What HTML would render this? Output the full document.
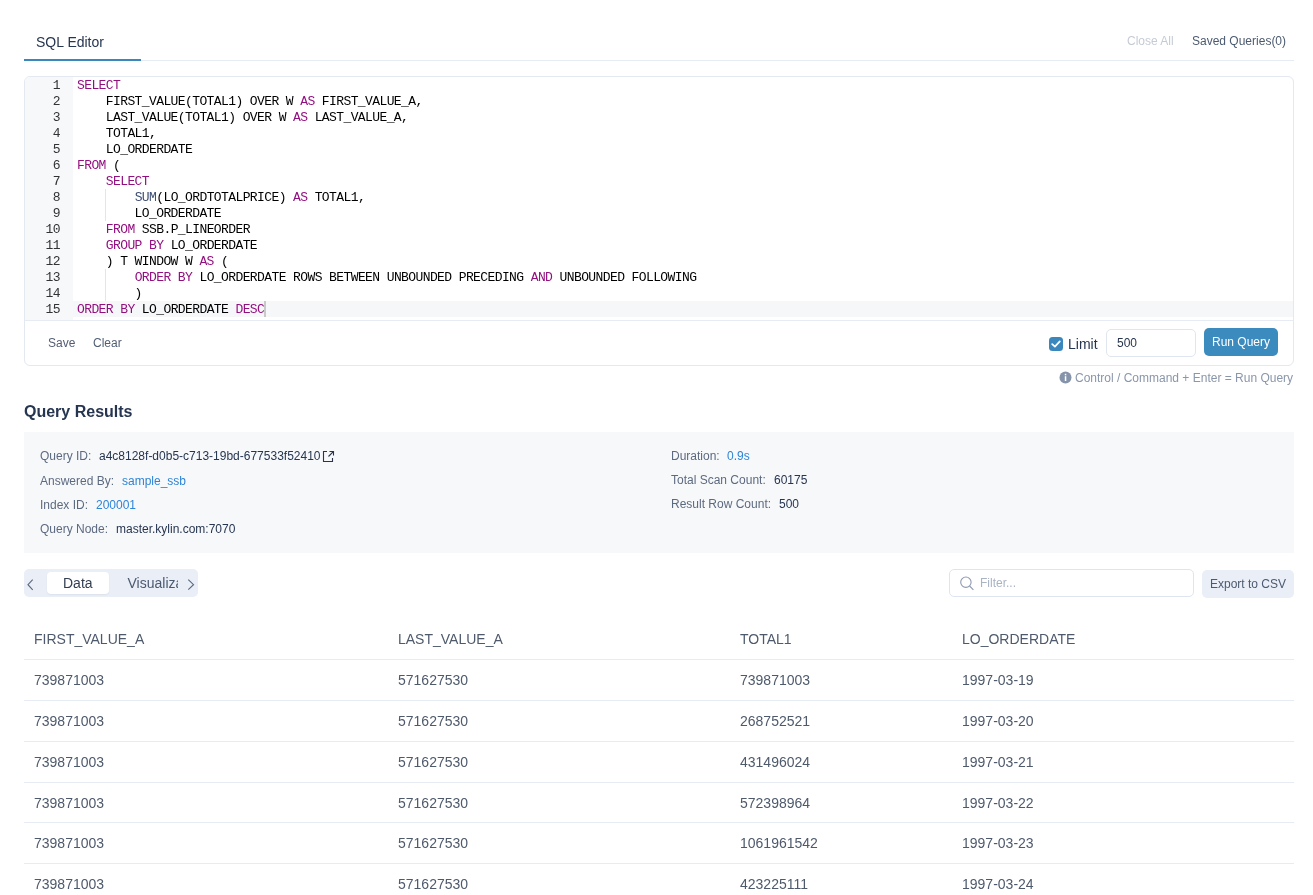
<!DOCTYPE html>
<html><head><meta charset="utf-8">
<style>
*{box-sizing:border-box;margin:0;padding:0}
html,body{width:1313px;height:895px;overflow:hidden;background:#fff;font-family:"Liberation Sans",sans-serif;}
.abs{position:absolute}
.t{position:absolute;white-space:pre;line-height:1}
/* header */
#tabtxt{left:36px;top:35px;font-size:14px;color:#263550}
#tabline{left:24px;top:59px;width:117px;height:2px;background:#3a87be}
#hdrline{left:141px;top:60px;width:1153px;height:1px;background:#e6ebf4}
#closeall{left:1127px;top:35px;font-size:12px;color:#c5cbd5}
#saved{left:1192px;top:35px;font-size:12px;color:#4c5a70}
/* editor */
#editor{left:24px;top:76px;width:1270px;height:290px;border:1px solid #e3e8f1;border-radius:6px;overflow:hidden}
#gutter{left:0;top:0;width:48px;height:243px;background:#f6f8fa}
#code{left:48px;top:0;width:1221px;height:243px}
.ln{position:absolute;left:0;width:35px;margin-top:1px;text-align:right;font-family:"Liberation Mono",monospace;font-size:13px;letter-spacing:-0.6px;line-height:16px;color:#333}
.cl{position:absolute;left:4px;margin-top:1px;font-family:"Liberation Mono",monospace;font-size:13px;letter-spacing:-0.6px;line-height:16px;color:#000;white-space:pre}
.kw{color:#930f80}
.fn{color:#3c4c72}
#active{left:0;top:224px;width:1220px;height:16px;background:#f6f7f9}
.guide{position:absolute;width:1px;background:#e5e5e5}
#cursor{left:191px;top:224px;width:2px;height:16px;background:#c9c9c9}
#tbline{left:0;top:243px;width:1270px;height:1px;background:#e6ebf4}
#save{left:23px;top:260px;font-size:12px;color:#515e74}
#clear{left:68px;top:260px;font-size:12px;color:#515e74}
#chk{left:1024px;top:260px;width:14px;height:14px;border-radius:3.5px;background:#3a87bd}
#limit{left:1043px;top:260px;font-size:14px;color:#263550}
#limitin{left:1081px;top:252px;width:90px;height:28px;border:1px solid #e0e6f0;border-radius:5px}
#limitv{left:10px;top:7px;font-size:12px;color:#263550}
#run{left:1179px;top:251px;width:74px;height:28px;border-radius:5px;background:#3b8bbe}
#runv{left:8px;top:8px;font-size:12px;color:#fff}
#hint{left:1075px;top:372px;font-size:12px;color:#8a96ab}
/* results */
#qr{left:24px;top:404px;font-size:16px;font-weight:bold;color:#263550}
#panel{left:24px;top:432px;width:1270px;height:121px;background:#f7f8fa}
.lbl{font-size:12px;color:#5c6a80}
.val{font-size:12px;color:#263550}
.lnk{font-size:12px;color:#2f84d6}
#pill{left:24px;top:569px;width:174px;height:28px;border-radius:5px;background:#e9eef7}
#datatab{left:23px;top:3px;width:62px;height:22px;border-radius:4px;background:#fff;box-shadow:0 1px 2px rgba(0,0,0,0.06)}
#filter{left:949px;top:569px;width:245px;height:28px;border:1px solid #dfe5f0;border-radius:5px}
#export{left:1202px;top:570px;width:92px;height:28px;border-radius:5px;background:#e9eef7}
.th{font-size:14px;color:#4e5a6c}
.td{font-size:14px;color:#4e5a6c}
.rb{position:absolute;left:24px;width:1270px;height:1px;background:#e6ebf4}
</style></head><body>
<div id="root" style="position:absolute;left:0;top:0;width:1313px;height:895px;will-change:transform;background:#fff">
<div id="tabtxt" class="t">SQL Editor</div>
<div id="tabline" class="abs"></div>
<div id="hdrline" class="abs"></div>
<div id="closeall" class="t">Close All</div>
<div id="saved" class="t">Saved Queries(0)</div>

<div id="editor" class="abs">
  <div id="gutter" class="abs">
    <div class="ln" style="top:0">1</div>
    <div class="ln" style="top:16px">2</div>
    <div class="ln" style="top:32px">3</div>
    <div class="ln" style="top:48px">4</div>
    <div class="ln" style="top:64px">5</div>
    <div class="ln" style="top:80px">6</div>
    <div class="ln" style="top:96px">7</div>
    <div class="ln" style="top:112px">8</div>
    <div class="ln" style="top:128px">9</div>
    <div class="ln" style="top:144px">10</div>
    <div class="ln" style="top:160px">11</div>
    <div class="ln" style="top:176px">12</div>
    <div class="ln" style="top:192px">13</div>
    <div class="ln" style="top:208px">14</div>
    <div class="ln" style="top:224px">15</div>
  </div>
  <div id="code" class="abs">
    <div id="active" class="abs"></div>
    <div class="guide" style="left:32px;top:112px;height:32px"></div>
    <div class="guide" style="left:32px;top:192px;height:32px"></div>
    <div class="cl" style="top:0"><span class="kw">SELECT</span></div>
    <div class="cl" style="top:16px">    FIRST_VALUE(TOTAL1) OVER W <span class="kw">AS</span> FIRST_VALUE_A,</div>
    <div class="cl" style="top:32px">    LAST_VALUE(TOTAL1) OVER W <span class="kw">AS</span> LAST_VALUE_A,</div>
    <div class="cl" style="top:48px">    TOTAL1,</div>
    <div class="cl" style="top:64px">    LO_ORDERDATE</div>
    <div class="cl" style="top:80px"><span class="kw">FROM</span> (</div>
    <div class="cl" style="top:96px">    <span class="kw">SELECT</span></div>
    <div class="cl" style="top:112px">        <span class="fn">SUM</span>(LO_ORDTOTALPRICE) <span class="kw">AS</span> TOTAL1,</div>
    <div class="cl" style="top:128px">        LO_ORDERDATE</div>
    <div class="cl" style="top:144px">    <span class="kw">FROM</span> SSB.P_LINEORDER</div>
    <div class="cl" style="top:160px">    <span class="kw">GROUP BY</span> LO_ORDERDATE</div>
    <div class="cl" style="top:176px">    ) T WINDOW W <span class="kw">AS</span> (</div>
    <div class="cl" style="top:192px">        <span class="kw">ORDER BY</span> LO_ORDERDATE ROWS BETWEEN UNBOUNDED PRECEDING <span class="kw">AND</span> UNBOUNDED FOLLOWING</div>
    <div class="cl" style="top:208px">        )</div>
    <div class="cl" style="top:224px"><span class="kw">ORDER BY</span> LO_ORDERDATE <span class="kw">DESC</span></div>
    <div id="cursor" class="abs"></div>
  </div>
  <div id="tbline" class="abs"></div>
  <div id="save" class="t">Save</div>
  <div id="clear" class="t">Clear</div>
  <div id="chk" class="abs"><svg width="14" height="14" viewBox="0 0 14 14" style="position:absolute;left:0;top:0"><path d="M3.2 7.2 L5.9 9.6 L10.8 4.4" fill="none" stroke="#fff" stroke-width="1.8" stroke-linecap="round" stroke-linejoin="round"/></svg></div>
  <div id="limit" class="t">Limit</div>
  <div id="limitin" class="abs"><div id="limitv" class="t">500</div></div>
  <div id="run" class="abs"><div id="runv" class="t">Run Query</div></div>
</div>
<svg class="abs" style="left:1059px;top:371px" width="13" height="13" viewBox="0 0 13 13"><circle cx="6.5" cy="6.5" r="6" fill="#8594ab"/><rect x="5.8" y="5.2" width="1.5" height="4.8" fill="#fff"/><rect x="5.8" y="2.8" width="1.5" height="1.5" fill="#fff"/></svg>
<div id="hint" class="t">Control / Command + Enter = Run Query</div>

<div id="qr" class="t">Query Results</div>
<div id="panel" class="abs">
  <div class="t lbl" style="left:16px;top:18px">Query ID:</div><div class="t val" style="left:75px;top:18px">a4c8128f-d0b5-c713-19bd-677533f52410</div>
  <svg class="abs" style="left:296px;top:17px" width="16" height="16" viewBox="0 0 16 16"><path d="M7 2.5 H3.5 V12.5 H12.5 V9" fill="none" stroke="#2a3548" stroke-width="1.1"/><path d="M9.5 2.5 H13.5 V6.5 M13.3 2.7 L8.5 7.5" fill="none" stroke="#2a3548" stroke-width="1.1"/></svg>
  <div class="t lbl" style="left:16px;top:43px">Answered By:</div><div class="t lnk" style="left:98px;top:43px">sample_ssb</div>
  <div class="t lbl" style="left:16px;top:67px">Index ID:</div><div class="t lnk" style="left:72px;top:67px">200001</div>
  <div class="t lbl" style="left:16px;top:91px">Query Node:</div><div class="t val" style="left:92px;top:91px">master.kylin.com:7070</div>
  <div class="t lbl" style="left:647px;top:18px">Duration:</div><div class="t lnk" style="left:703px;top:18px">0.9s</div>
  <div class="t lbl" style="left:647px;top:42px">Total Scan Count:</div><div class="t val" style="left:750px;top:42px">60175</div>
  <div class="t lbl" style="left:647px;top:66px">Result Row Count:</div><div class="t val" style="left:755px;top:66px">500</div>
</div>

<div id="pill" class="abs">
  <svg class="abs" style="left:3px;top:10px" width="8" height="12" viewBox="0 0 8 12"><path d="M5.7 0.6 L1 5.7 L5.7 10.8" fill="none" stroke="#5c6a80" stroke-width="1.15"/></svg>
  <div id="datatab" class="abs"></div>
  <div class="t" style="left:39px;top:7px;font-size:14px;color:#323d51">Data</div>
  <div class="abs" style="left:103px;top:0;width:51px;height:28px;overflow:hidden"><div class="t" style="left:0.5px;top:7px;font-size:14px;color:#4c5a70">Visualization</div></div>
  <svg class="abs" style="left:163px;top:10px" width="8" height="12" viewBox="0 0 8 12"><path d="M1.3 0.7 L6.5 5.7 L1.3 10.7" fill="none" stroke="#5c6a80" stroke-width="1.15"/></svg>
</div>
<div id="filter" class="abs">
  <svg class="abs" style="left:10px;top:6px" width="16" height="16" viewBox="0 0 16 16"><circle cx="5.9" cy="6.2" r="5.2" fill="none" stroke="#8f9bb0" stroke-width="1.1"/><path d="M9.6 10 L13.4 13.8" stroke="#8f9bb0" stroke-width="1.1"/></svg>
  <div class="t" style="left:30px;top:7px;font-size:12px;color:#aab3c4">Filter...</div>
</div>
<div id="export" class="abs"><div class="t" style="left:8px;top:8px;font-size:12px;color:#4c5a70">Export to CSV</div></div>

<div class="t th" style="left:34px;top:632px">FIRST_VALUE_A</div>
<div class="t th" style="left:398px;top:632px">LAST_VALUE_A</div>
<div class="t th" style="left:740px;top:632px">TOTAL1</div>
<div class="t th" style="left:962px;top:632px">LO_ORDERDATE</div>
<div class="rb" style="top:659px"></div>

<div class="t td" style="left:34px;top:673px">739871003</div><div class="t td" style="left:398px;top:673px">571627530</div><div class="t td" style="left:740px;top:673px">739871003</div><div class="t td" style="left:962px;top:673px">1997-03-19</div>
<div class="rb" style="top:700px"></div>
<div class="t td" style="left:34px;top:714px">739871003</div><div class="t td" style="left:398px;top:714px">571627530</div><div class="t td" style="left:740px;top:714px">268752521</div><div class="t td" style="left:962px;top:714px">1997-03-20</div>
<div class="rb" style="top:741px"></div>
<div class="t td" style="left:34px;top:755px">739871003</div><div class="t td" style="left:398px;top:755px">571627530</div><div class="t td" style="left:740px;top:755px">431496024</div><div class="t td" style="left:962px;top:755px">1997-03-21</div>
<div class="rb" style="top:782px"></div>
<div class="t td" style="left:34px;top:796px">739871003</div><div class="t td" style="left:398px;top:796px">571627530</div><div class="t td" style="left:740px;top:796px">572398964</div><div class="t td" style="left:962px;top:796px">1997-03-22</div>
<div class="rb" style="top:822px"></div>
<div class="t td" style="left:34px;top:836px">739871003</div><div class="t td" style="left:398px;top:836px">571627530</div><div class="t td" style="left:740px;top:836px">1061961542</div><div class="t td" style="left:962px;top:836px">1997-03-23</div>
<div class="rb" style="top:863px"></div>
<div class="t td" style="left:34px;top:877px">739871003</div><div class="t td" style="left:398px;top:877px">571627530</div><div class="t td" style="left:740px;top:877px">423225111</div><div class="t td" style="left:962px;top:877px">1997-03-24</div>
</div>
</body></html>
